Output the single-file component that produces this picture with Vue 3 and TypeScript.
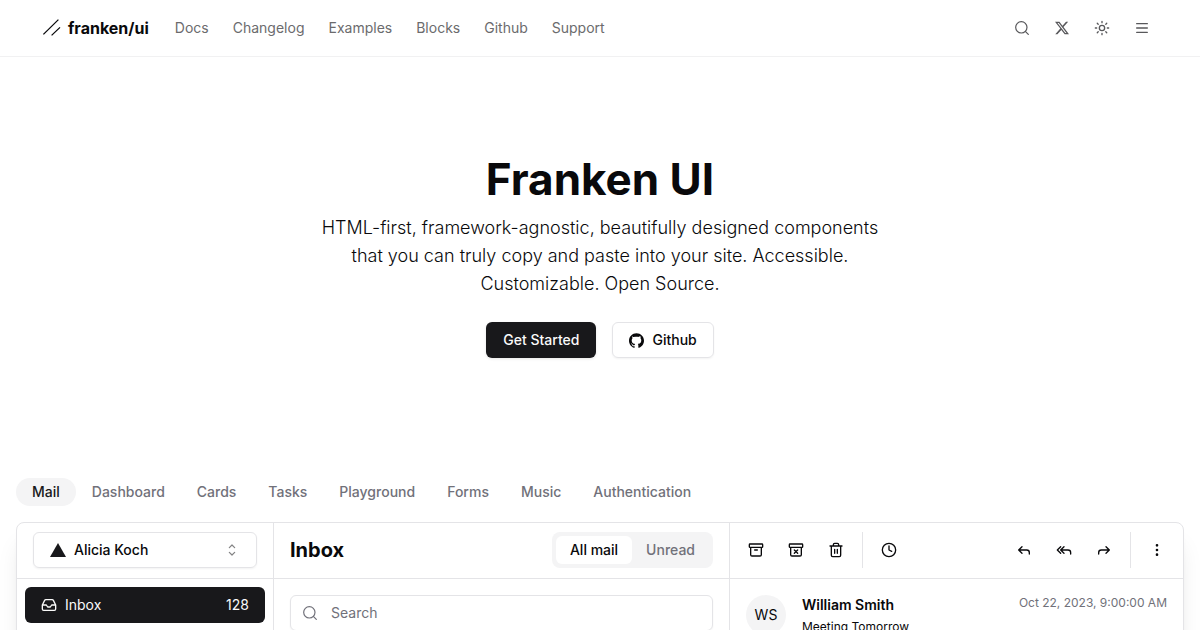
<script setup lang="ts">
import { ref } from 'vue'

interface Action {
  label: string
  icon: string
}

const links: string[] = ['Docs', 'Changelog', 'Examples', 'Blocks', 'Github', 'Support']
const tabs: string[] = ['Mail', 'Dashboard', 'Cards', 'Tasks', 'Playground', 'Forms', 'Music', 'Authentication']
const filters: string[] = ['All mail', 'Unread']

const activeTab = ref('Mail')
const activeFilter = ref('All mail')
const account = ref('Alicia Koch')
const query = ref('')

const fileActions: Action[] = [
  { label: 'Archive', icon: 'M3 3h18a1 1 0 0 1 1 1v3a1 1 0 0 1-1 1H3a1 1 0 0 1-1-1V4a1 1 0 0 1 1-1zM4 8v11a2 2 0 0 0 2 2h12a2 2 0 0 0 2-2V8M10 12h4' },
  { label: 'Move to junk', icon: 'M3 3h18a1 1 0 0 1 1 1v3a1 1 0 0 1-1 1H3a1 1 0 0 1-1-1V4a1 1 0 0 1 1-1zM4 8v11a2 2 0 0 0 2 2h12a2 2 0 0 0 2-2V8M9.5 17l5-5M9.5 12l5 5' },
  { label: 'Move to trash', icon: 'M3 6h18M19 6v14a2 2 0 0 1-2 2H7a2 2 0 0 1-2-2V6M8 6V4a2 2 0 0 1 2-2h4a2 2 0 0 1 2 2v2M10 11v6M14 11v6' },
]
const replyActions: Action[] = [
  { label: 'Reply', icon: 'M9 17l-5-5 5-5M20 18v-2a4 4 0 0 0-4-4H4' },
  { label: 'Reply all', icon: 'M7 17l-5-5 5-5M12 17l-5-5 5-5M22 18v-2a4 4 0 0 0-4-4H7' },
  { label: 'Forward', icon: 'M15 17l5-5-5-5M4 18v-2a4 4 0 0 1 4-4h12' },
]
</script>

<template>
  <div class="page">
    <header class="site-header">
      <div class="container">
        <a href="#" class="brand">
          <svg class="brand-mark" viewBox="0 0 20 20" aria-hidden="true">
            <path d="M1.4 16.4 16.4 1.6M9.6 17.4 18 9.4" />
          </svg>
          <span>franken/ui</span>
        </a>
        <nav class="site-nav" aria-label="Main">
          <a v-for="link in links" :key="link" href="#">{{ link }}</a>
        </nav>
        <div class="tools">
          <button type="button" class="icon-button" aria-label="Search">
            <svg class="icon thin" viewBox="0 0 24 24"><circle cx="11" cy="11" r="8.5" /><path d="m21.5 21.5-4.5-4.5" /></svg>
          </button>
          <a href="#" class="icon-button" aria-label="X">
            <svg class="x-logo" viewBox="0 0 24 24"><path d="M18.901 1.153h3.68l-8.04 9.19L24 22.846h-7.406l-5.8-7.584-6.638 7.584H.474l8.6-9.83L0 1.154h7.594l5.243 6.932ZM17.61 20.644h2.039L6.486 3.24H4.298Z" /></svg>
          </a>
          <button type="button" class="icon-button" aria-label="Theme">
            <svg class="icon" viewBox="0 0 24 24"><circle cx="12" cy="12" r="4" /><path d="M12 2v2M12 20v2M4.9 4.9l1.4 1.4M17.7 17.7l1.4 1.4M2 12h2M20 12h2M6.3 17.7l-1.4 1.4M19.1 4.9l-1.4 1.4" /></svg>
          </button>
          <button type="button" class="icon-button" aria-label="Menu">
            <svg class="icon" viewBox="0 0 24 24"><path d="M4 5.5h16M4 12h16M4 18.5h16" /></svg>
          </button>
        </div>
      </div>
    </header>

    <main>
      <section class="hero">
        <h1>Franken UI</h1>
        <p>
          HTML-first, framework-agnostic, beautifully designed components that you can truly copy and paste into
          your site. Accessible. Customizable. Open Source.
        </p>
        <div class="hero-actions">
          <a href="#" class="button primary">Get Started</a>
          <a href="#" class="button outline">
            <svg class="github" viewBox="0 0 24 24" aria-hidden="true"><path d="M12 .297c-6.63 0-12 5.373-12 12 0 5.303 3.438 9.8 8.205 11.385.6.113.82-.258.82-.577 0-.285-.01-1.04-.015-2.04-3.338.724-4.042-1.61-4.042-1.61C4.422 18.07 3.633 17.7 3.633 17.7c-1.087-.744.084-.729.084-.729 1.205.084 1.838 1.236 1.838 1.236 1.07 1.835 2.809 1.305 3.495.998.108-.776.417-1.305.76-1.605-2.665-.3-5.466-1.332-5.466-5.93 0-1.31.465-2.38 1.235-3.22-.135-.303-.54-1.523.105-3.176 0 0 1.005-.322 3.3 1.23.96-.267 1.98-.399 3-.405 1.02.006 2.04.138 3 .405 2.28-1.552 3.285-1.23 3.285-1.23.645 1.653.24 2.873.12 3.176.765.84 1.23 1.91 1.23 3.22 0 4.61-2.805 5.625-5.475 5.92.42.36.81 1.096.81 2.22 0 1.606-.015 2.896-.015 3.286 0 .315.21.69.825.57C20.565 22.092 24 17.592 24 12.297c0-6.627-5.373-12-12-12" /></svg>
            Github
          </a>
        </div>
      </section>

      <section class="examples">
        <div class="tabs">
          <button v-for="tab in tabs" :key="tab" type="button" :class="{ active: tab === activeTab }" @click="activeTab = tab">{{ tab }}</button>
        </div>

        <div class="mail">
          <aside class="column">
            <div class="bar account-bar">
              <div class="account">
                <svg class="account-logo" viewBox="0 0 24 24" aria-hidden="true"><path d="M24 22.525H0l12-21.05 12 21.05z" /></svg>
                <select v-model="account" aria-label="Account">
                  <option>Alicia Koch</option>
                </select>
                <svg class="icon thin chevrons" viewBox="0 0 24 24" aria-hidden="true"><path d="m8 15.500 4 4 4-4M8 8.500l4-4 4 4" /></svg>
              </div>
            </div>
            <nav class="folders" aria-label="Folders">
              <a href="#" class="folder">
                <svg class="icon" viewBox="0 0 24 24" aria-hidden="true"><path d="M22 12h-6l-2 3h-4l-2-3H2M5.45 5.11 2 12v6a2 2 0 0 0 2 2h16a2 2 0 0 0 2-2v-6l-3.45-6.89A2 2 0 0 0 16.76 4H7.24a2 2 0 0 0-1.79 1.11z" /></svg>
                <span>Inbox</span>
                <span class="count">128</span>
              </a>
            </nav>
          </aside>

          <section class="column">
            <div class="bar inbox-bar">
              <h2>Inbox</h2>
              <div class="segment">
                <button v-for="filter in filters" :key="filter" type="button" :class="{ active: filter === activeFilter }" @click="activeFilter = filter">{{ filter }}</button>
              </div>
            </div>
            <form class="search" @submit.prevent>
              <svg class="icon thin search-icon" viewBox="0 0 24 24" aria-hidden="true"><circle cx="11" cy="11" r="8.5" /><path d="m21.5 21.5-4.5-4.5" /></svg>
              <input v-model="query" type="text" placeholder="Search" aria-label="Search mail" />
            </form>
          </section>

          <section class="column">
            <div class="bar action-bar">
              <button v-for="action in fileActions" :key="action.label" type="button" class="icon-button" :aria-label="action.label">
                <svg class="icon" viewBox="0 0 24 24"><path :d="action.icon" /></svg>
              </button>
              <span class="divider"></span>
              <button type="button" class="icon-button" aria-label="Snooze">
                <svg class="icon" viewBox="0 0 24 24"><circle cx="12" cy="12" r="10" /><path d="M12 6v6l4 2" /></svg>
              </button>
              <span class="spacer"></span>
              <button v-for="action in replyActions" :key="action.label" type="button" class="icon-button" :aria-label="action.label">
                <svg class="icon" viewBox="0 0 24 24"><path :d="action.icon" /></svg>
              </button>
              <span class="divider"></span>
              <button type="button" class="icon-button" aria-label="More">
                <svg class="icon dots" viewBox="0 0 24 24"><circle cx="12" cy="5" r="1" /><circle cx="12" cy="12" r="1" /><circle cx="12" cy="19" r="1" /></svg>
              </button>
            </div>
            <article class="message">
              <span class="avatar">WS</span>
              <div class="sender">
                <h3>William Smith</h3>
                <p>Meeting Tomorrow</p>
              </div>
              <time datetime="2023-10-22T09:00:00">Oct 22, 2023, 9:00:00 AM</time>
            </article>
          </section>
        </div>
      </section>
    </main>
  </div>
</template>

<style>
body {
  background: #fff;
}
</style>

<style scoped>
.page,
.page * {
  box-sizing: border-box;
}

.page {
  color: #09090b;
  font-family: Inter, 'Liberation Sans', sans-serif;
  font-size: 14px;
  line-height: 20px;
}

h1,
h2,
h3,
p {
  margin: 0;
}

a {
  color: inherit;
  text-decoration: none;
}

button,
input,
select {
  margin: 0;
  padding: 0;
  border: 0;
  background: transparent;
  color: inherit;
  font: inherit;
}

button {
  cursor: pointer;
}

svg {
  display: block;
  flex: none;
}

.icon {
  width: 16px;
  height: 16px;
  fill: none;
  stroke: currentColor;
  stroke-width: 2;
  stroke-linecap: round;
  stroke-linejoin: round;
}

.icon.thin {
  stroke-width: 1.8;
}

.icon.dots {
  fill: currentColor;
}

.icon-button {
  display: flex;
  align-items: center;
  justify-content: center;
  width: 36px;
  height: 36px;
}

.site-header {
  border-bottom: 1px solid #f1f1f2;
}

.container {
  display: flex;
  align-items: center;
  max-width: 1400px;
  height: 56px;
  margin: 0 auto;
  padding: 0 40px;
}

.brand {
  display: flex;
  align-items: center;
  gap: 6px;
  margin-right: 26px;
  padding-left: 2px;
  font-size: 16px;
  line-height: 24px;
  font-weight: 700;
}

.brand-mark {
  width: 20px;
  height: 20px;
  fill: none;
  stroke: currentColor;
  stroke-width: 1.3;
}

.site-nav {
  display: flex;
  gap: 24px;
  color: #6b6b6d;
}

.tools {
  display: flex;
  gap: 4px;
  margin-left: auto;
  color: #58585b;
}

.x-logo {
  width: 14px;
  height: 14px;
  fill: currentColor;
}

.hero {
  display: flex;
  flex-direction: column;
  align-items: center;
  padding: 96px 16px;
  text-align: center;
}

.hero h1 {
  font-size: 44px;
  line-height: 53px;
  font-weight: 700;
}

.hero p {
  max-width: 576px;
  margin-top: 8px;
  font-size: 18px;
  line-height: 28px;
  font-weight: 300;
}

.hero-actions {
  display: flex;
  gap: 16px;
  margin-top: 24px;
}

.button {
  display: flex;
  align-items: center;
  gap: 8px;
  height: 36px;
  padding: 0 17px;
  border-radius: 6px;
  font-weight: 500;
}

.button.primary {
  background: #18181b;
  color: #fafafa;
  box-shadow: 0 1px 3px rgba(0, 0, 0, 0.1);
}

.button.outline {
  padding: 0 16px;
  border: 1px solid #e4e4e7;
  box-shadow: 0 1px 2px rgba(0, 0, 0, 0.05);
}

.github {
  width: 15px;
  height: 15px;
  fill: currentColor;
}

.examples {
  padding: 24px 16px;
}

.tabs {
  display: flex;
  margin-bottom: 16px;
}

.tabs button {
  height: 28px;
  padding: 0 16px;
  border-radius: 14px;
  color: #71717a;
  font-weight: 500;
}

.tabs .active {
  background: #f4f4f5;
  color: #18181b;
}

.mail {
  display: grid;
  grid-template-columns: 256fr 456fr 454fr;
  min-height: 600px;
  border: 1px solid #e4e4e7;
  border-radius: 8px;
  background: #fff;
  box-shadow: 0 20px 25px -5px rgba(0, 0, 0, 0.1), 0 8px 10px -6px rgba(0, 0, 0, 0.1);
}

.column {
  min-width: 0;
}

.column + .column {
  border-left: 1px solid #e4e4e7;
}

.bar {
  display: flex;
  align-items: center;
  height: 56px;
  border-bottom: 1px solid #e4e4e7;
}

.account-bar,
.inbox-bar {
  padding: 0 16px 1px;
}

.account {
  display: grid;
  flex: 1;
  grid-template-columns: 16px 1fr 16px;
  align-items: center;
}

.account select {
  grid-row: 1;
  grid-column: 1 / -1;
  width: 100%;
  height: 36px;
  padding: 0 40px;
  border: 1px solid #e4e4e7;
  border-radius: 6px;
  box-shadow: 0 1px 2px rgba(0, 0, 0, 0.05);
  font-weight: 500;
  appearance: none;
}

.account-logo {
  grid-row: 1;
  grid-column: 1;
  width: 16px;
  height: 16px;
  margin-left: 17px;
  fill: #18181b;
}

.chevrons {
  grid-row: 1;
  grid-column: 3;
  margin-left: -17px;
  opacity: 0.5;
}

.folders {
  padding: 8px;
}

.folder {
  display: flex;
  align-items: center;
  gap: 8px;
  height: 36px;
  padding: 0 16px;
  border-radius: 6px;
  background: #18181b;
  color: #fafafa;
}

.count {
  margin-left: auto;
}

.inbox-bar {
  justify-content: space-between;
}

.inbox-bar h2 {
  font-size: 20px;
  line-height: 28px;
  font-weight: 700;
}

.segment {
  display: flex;
  padding: 4px;
  border-radius: 8px;
  background: #f4f4f5;
}

.segment button {
  height: 28px;
  padding: 0 14px;
  border-radius: 6px;
  color: #71717a;
  font-weight: 500;
}

.segment .active {
  background: #fff;
  color: #09090b;
}

.search {
  display: grid;
  grid-template-columns: 40px 1fr;
  align-items: center;
  padding: 16px;
}

.search-icon {
  grid-row: 1;
  grid-column: 1;
  justify-self: center;
  color: #71717a;
}

.search input {
  grid-row: 1;
  grid-column: 1 / -1;
  width: 100%;
  height: 36px;
  padding: 0 12px 2px 40px;
  border: 1px solid #e4e4e7;
  border-radius: 6px;
  box-shadow: 0 1px 2px rgba(0, 0, 0, 0.05);
}

.search input::placeholder {
  color: #71717a;
  opacity: 1;
}

.action-bar {
  gap: 4px;
  padding: 0 8px 1px;
}

.divider {
  width: 1px;
  height: 36px;
  margin: 0 4px;
  background: #e4e4e7;
}

.spacer {
  flex: 1;
}

.message {
  display: flex;
  align-items: flex-start;
  gap: 16px;
  padding: 16px;
}

.avatar {
  display: flex;
  align-items: center;
  justify-content: center;
  width: 40px;
  height: 40px;
  border-radius: 50%;
  background: #f4f4f5;
}

.sender {
  flex: 1;
}

.sender h3 {
  font-size: 14px;
  line-height: 20px;
  font-weight: 600;
}

.sender p {
  margin-top: 4px;
  font-size: 12px;
  line-height: 16px;
}

.message time {
  color: #71717a;
  font-size: 12px;
  line-height: 16px;
}
</style>
